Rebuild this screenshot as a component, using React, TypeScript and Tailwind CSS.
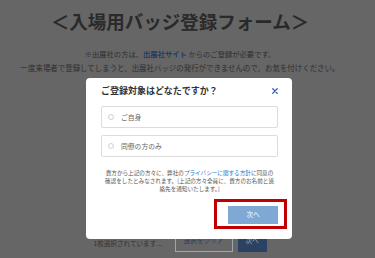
import React from "react";

const font = "font-['Noto_Sans_CJK_JP','Noto_Sans',sans-serif]";

function Option({ label }: { label: string }) {
  return (
    <div className="flex h-[22px] items-center rounded-[2px] border border-[#dcdcdc] bg-white pl-[6px]">
      <span className="h-[6px] w-[6px] rounded-full border border-[#d0d0d0]" />
      <span className="ml-[7px] text-[6.8px] leading-[10px] text-[#666666]">{label}</span>
    </div>
  );
}

export default function App() {
  return (
    <div className={`relative h-[258px] w-[375px] overflow-hidden bg-[#666666] ${font}`}>
      {/* page behind overlay */}
      <div className="flex flex-col items-center pr-[15px]">
        <h1 className="mt-[9px] whitespace-nowrap text-[18.5px] font-bold leading-[24px] text-[#2a2a2a]">
          ＜入場用バッジ登録フォーム＞
        </h1>
        <p className="mt-[14px] whitespace-nowrap text-[7.3px] leading-[14px] text-[#2e2e2e]">
          ※出展社の方は、<span className="font-bold text-[#1e3c63]">出展社サイト</span> からのご登録が必要です。
        </p>
        <p className="whitespace-nowrap text-[7.45px] leading-[14px] text-[#2e2e2e]">
          一度来場者で登録してしまうと、出展社バッジの発行ができませんので、お気を付けください。
        </p>
        <div className="mt-[155px] flex items-center">
          <span className="mt-[4px] w-[70px] whitespace-nowrap text-[6.6px] leading-[10px] text-[#333333]">
            1枚選択されています...
          </span>
          <div className="ml-[11px] flex h-[22px] w-[58px] items-center justify-center border border-[#9aa6b3] text-[6.6px] text-[#2a405c]">
            選択をクリア
          </div>
          <div className="ml-[5px] flex h-[22px] w-[29px] items-center justify-center bg-[#2b4262] text-[6.6px] text-[#a9b3bf]">
            次へ
          </div>
        </div>
      </div>

      {/* modal */}
      <div className="absolute left-[86px] top-[78px] w-[206px] rounded-[4px] bg-white px-[15px] pb-[10px] pl-[15px] pr-[14px] pt-[6px]">
        <div className="flex h-[14px] items-center justify-between">
          <span className="text-[9px] font-bold leading-[14px] text-[#333333]">ご登録対象はどなたですか？</span>
          <svg width="6" height="6" viewBox="0 0 6 6" className="mr-[0.5px]">
            <path d="M0.8 0.8 L5.2 5.2 M5.2 0.8 L0.8 5.2" stroke="#3a64a8" strokeWidth="1.3" strokeLinecap="round" />
          </svg>
        </div>
        <div className="mt-[8px] flex flex-col gap-[7px]">
          <Option label="ご自身" />
          <Option label="同僚の方のみ" />
        </div>
        <div className="mt-[12px] flex flex-col items-center text-[5.6px] leading-[8px] text-[#555555]">
          <span className="whitespace-nowrap">
            貴方から上記の方々に、弊社の<span className="text-[#2a78cc]">プライバシーに関する方針</span>に同意の
          </span>
          <span className="whitespace-nowrap">確認をしたとみなされます。[上記の方々全員に、貴方のお名前と連</span>
          <span className="whitespace-nowrap">絡先を通知いたします。]</span>
        </div>
        <div className="mt-[6px] flex justify-end">
          <div className="-mr-[9px] border-[3px] border-[#c00000] pb-[2px] pl-[11px] pr-[6px] pt-[4px]">
            <div className="flex h-[18px] w-[50px] items-center justify-center bg-[#7fa8d5] text-[6.6px] text-white">
              次へ
            </div>
          </div>
        </div>
      </div>
    </div>
  );
}
